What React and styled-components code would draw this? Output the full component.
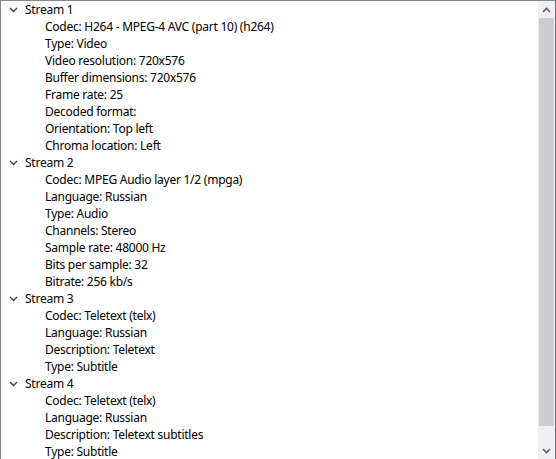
import React from 'react';
import styled, { createGlobalStyle } from 'styled-components';

const GlobalS = createGlobalStyle`
  html, body {
    margin: 0;
    padding: 0;
    background: #ffffff;
    overflow: hidden;
  }
  body {
    font-family: "Noto Sans", "Open Sans", sans-serif;
    font-size: 12px;
    letter-spacing: -0.25px;
    color: #000;
  }
`;

const streams = [
  {
    name: 'Stream 1',
    props: [
      'Codec: H264 - MPEG-4 AVC (part 10) (h264)',
      'Type: Video',
      'Video resolution: 720x576',
      'Buffer dimensions: 720x576',
      'Frame rate: 25',
      'Decoded format:',
      'Orientation: Top left',
      'Chroma location: Left',
    ],
  },
  {
    name: 'Stream 2',
    props: [
      'Codec: MPEG Audio layer 1/2 (mpga)',
      'Language: Russian',
      'Type: Audio',
      'Channels: Stereo',
      'Sample rate: 48000 Hz',
      'Bits per sample: 32',
      'Bitrate: 256 kb/s',
    ],
  },
  {
    name: 'Stream 3',
    props: [
      'Codec: Teletext (telx)',
      'Language: Russian',
      'Description: Teletext',
      'Type: Subtitle',
    ],
  },
  {
    name: 'Stream 4',
    props: [
      'Codec: Teletext (telx)',
      'Language: Russian',
      'Description: Teletext subtitles',
      'Type: Subtitle',
    ],
  },
];

const FrameS = styled.div`
  width: 556px;
  height: 459px;
  box-sizing: border-box;
  border-top: 1px solid #828790;
  border-left: 1px solid #828790;
  border-right: 1px solid #6e7087;
  display: flex;
  overflow: hidden;
`;

const TreeS = styled.div`
  flex: 1;
  display: flex;
  flex-direction: column;
  overflow: hidden;
`;

const RowS = styled.div`
  height: 17px;
  flex: 0 0 17px;
  display: flex;
  align-items: center;
  padding-left: ${(p) => p.$indent}px;
  white-space: nowrap;
  line-height: 17px;
`;

const ToggleS = styled.span`
  width: 17px;
  margin-left: 4px;
  margin-right: 3px;
  display: flex;
  align-items: center;
  justify-content: center;
`;

const ScrollBarS = styled.div`
  width: 17px;
  flex: 0 0 17px;
  background: #f0f0f0;
  display: flex;
  flex-direction: column;
`;

const ArrowBtnS = styled.div`
  height: 17px;
  flex: 0 0 17px;
  display: flex;
  align-items: center;
  justify-content: center;
`;

const TrackS = styled.div`
  flex: 1;
  display: flex;
  flex-direction: column;
  padding: 0 1px;
`;

const ThumbS = styled.div`
  background: #cdcdcd;
  height: 408px;
`;

const Chevron = ({ up }) => (
  <svg width="9" height="6" viewBox="0 0 9 6">
    <path
      d={up ? 'M1 5 L4.5 1.5 L8 5' : 'M1 1 L4.5 4.5 L8 1'}
      fill="none"
      stroke="#606060"
      strokeWidth="1.6"
    />
  </svg>
);

const Expander = () => (
  <svg width="9" height="6" viewBox="0 0 9 6">
    <path d="M1 1 L4.5 4.5 L8 1" fill="none" stroke="#404040" strokeWidth="1.4" />
  </svg>
);

export default function App() {
  return (
    <>
      <GlobalS />
      <FrameS>
        <TreeS>
          {streams.map((s) => (
            <React.Fragment key={s.name}>
              <RowS $indent={0}>
                <ToggleS>
                  <Expander />
                </ToggleS>
                {s.name}
              </RowS>
              {s.props.map((p) => (
                <RowS key={s.name + p} $indent={44}>
                  {p}
                </RowS>
              ))}
            </React.Fragment>
          ))}
        </TreeS>
        <ScrollBarS>
          <ArrowBtnS>
            <Chevron up />
          </ArrowBtnS>
          <TrackS>
            <ThumbS />
          </TrackS>
          <ArrowBtnS>
            <Chevron />
          </ArrowBtnS>
        </ScrollBarS>
      </FrameS>
    </>
  );
}
